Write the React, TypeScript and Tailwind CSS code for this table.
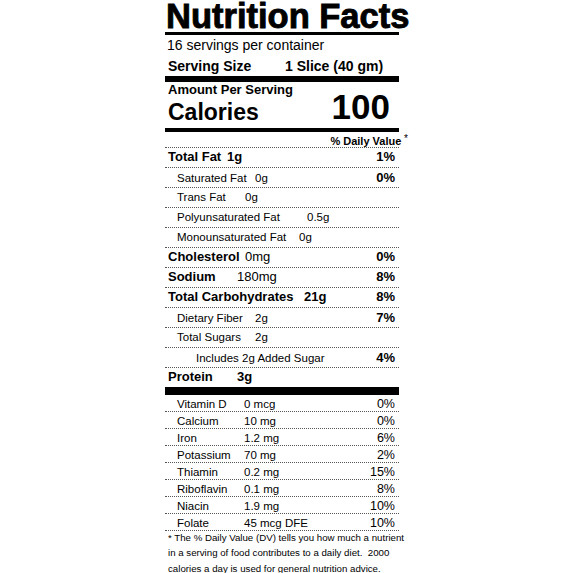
import React from "react";

type Row = {
  name: string;
  amount?: string;
  w?: number;
  pct?: string;
  indent: 0 | 1 | 2;
  bold: boolean;
  amountBold?: boolean;
};

const rows: Row[] = [
  { name: "Total Fat", amount: "1g", w: 59, pct: "1%", indent: 0, bold: true, amountBold: true },
  { name: "Saturated Fat", amount: "0g", w: 78, pct: "0%", indent: 1, bold: false },
  { name: "Trans Fat", amount: "0g", w: 68, indent: 1, bold: false },
  { name: "Polyunsaturated Fat", amount: "0.5g", w: 130, indent: 1, bold: false },
  { name: "Monounsaturated Fat", amount: "0g", w: 122, indent: 1, bold: false },
  { name: "Cholesterol", amount: "0mg", w: 77, pct: "0%", indent: 0, bold: true },
  { name: "Sodium", amount: "180mg", w: 69, pct: "8%", indent: 0, bold: true },
  { name: "Total Carbohydrates", amount: "21g", w: 136, pct: "8%", indent: 0, bold: true, amountBold: true },
  { name: "Dietary Fiber", amount: "2g", w: 78, pct: "7%", indent: 1, bold: false },
  { name: "Total Sugars", amount: "2g", w: 78, indent: 1, bold: false },
  { name: "Includes 2g Added Sugar", pct: "4%", indent: 2, bold: false },
];

const vitamins: [string, string, string][] = [
  ["Vitamin D", "0 mcg", "0%"],
  ["Calcium", "10 mg", "0%"],
  ["Iron", "1.2 mg", "6%"],
  ["Potassium", "70 mg", "2%"],
  ["Thiamin", "0.2 mg", "15%"],
  ["Riboflavin", "0.1 mg", "8%"],
  ["Niacin", "1.9 mg", "10%"],
  ["Folate", "45 mcg DFE", "10%"],
];

function NutrientRow({ r }: { r: Row }) {
  const main = r.indent === 0;
  const pad = r.indent === 0 ? "pl-[3px]" : r.indent === 1 ? "pl-[12px]" : "pl-[31px]";
  return (
    <div
      className={`flex items-baseline h-[20px] border-t border-dotted border-[#555] ${pad} pr-[4px] ${
        main ? "leading-[17px]" : "leading-[19px]"
      }`}
    >
      <span
        className={`shrink-0 whitespace-nowrap ${r.bold ? "font-bold text-[13px]" : "text-[11.5px]"}`}
        style={r.w ? { width: r.w } : undefined}
      >
        {r.name}
      </span>
      {r.amount && (
        <span
          className={`whitespace-nowrap ${main ? "text-[13px]" : "text-[11.5px]"} ${
            r.amountBold ? "font-bold" : ""
          }`}
        >
          {r.amount}
        </span>
      )}
      {r.pct && <span className="ml-auto font-bold text-[13px]">{r.pct}</span>}
    </div>
  );
}

export default function App() {
  return (
    <div className="w-[573px] h-[573px] bg-white overflow-hidden text-black font-['Liberation_Sans',Arial,sans-serif]">
      <div className="ml-[165px] w-[234px]">
        {/* Title */}
        <div className="h-[32px] w-[250px] leading-[32px] text-[34.5px] font-bold whitespace-nowrap pl-[1px] [-webkit-text-stroke:0.9px_#000]">
          Nutrition Facts
        </div>
        <div className="h-[3px] bg-black" />
        <div className="h-[20px] leading-[20px] text-[14px] pl-[2px] whitespace-nowrap">
          16 servings per container
        </div>
        <div className="h-[21px] leading-[23px] text-[14px] font-bold pl-[3px] flex whitespace-nowrap">
          <span className="w-[117px] shrink-0">Serving Size</span>
          <span>1 Slice (40 gm)</span>
        </div>
        <div className="h-[6px] bg-black" />
        {/* Calories block */}
        <div className="h-[46px] flex justify-between">
          <div className="pl-[3px] font-bold whitespace-nowrap">
            <div className="h-[16px] leading-[16px] text-[13px]">Amount Per Serving</div>
            <div className="h-[28px] leading-[28px] text-[23px]">Calories</div>
          </div>
          <div className="pt-[7px] pr-[9px] leading-[35px] text-[35px] font-bold">100</div>
        </div>
        <div className="h-[4px] bg-black" />
        <div className="h-[15px] leading-[15px] text-right -mr-[9px] whitespace-nowrap">
          <span className="text-[11px] font-bold">% Daily Value</span>
          <span className="text-[10px] align-top leading-[13px]"> *</span>
        </div>
        {rows.map((r) => (
          <NutrientRow key={r.name} r={r} />
        ))}
        <div className="flex items-baseline h-[20px] border-t border-dotted border-[#555] pl-[3px] leading-[17px] font-bold text-[13px]">
          <span className="w-[69px] shrink-0">Protein</span>
          <span>3g</span>
        </div>
        <div className="h-[8px] bg-black" />
        {vitamins.map(([n, a, p]) => (
          <div
            key={n}
            className="flex items-baseline h-[17px] border-b border-dotted border-[#555] pl-[12px] pr-[4px] text-[11.5px] leading-[18px] whitespace-nowrap"
          >
            <span className="w-[67px] shrink-0">{n}</span>
            <span>{a}</span>
            <span className="ml-auto text-[12.5px]">{p}</span>
          </div>
        ))}
        <div className="pl-[3px] text-[9.7px] leading-[15.5px] whitespace-nowrap -mt-[1.5px] w-[250px]">
          <div>* The % Daily Value (DV) tells you how much a nutrient</div>
          <div>in a serving of food contributes to a daily diet.&nbsp; 2000</div>
          <div>calories a day is used for general nutrition advice.</div>
        </div>
      </div>
    </div>
  );
}
